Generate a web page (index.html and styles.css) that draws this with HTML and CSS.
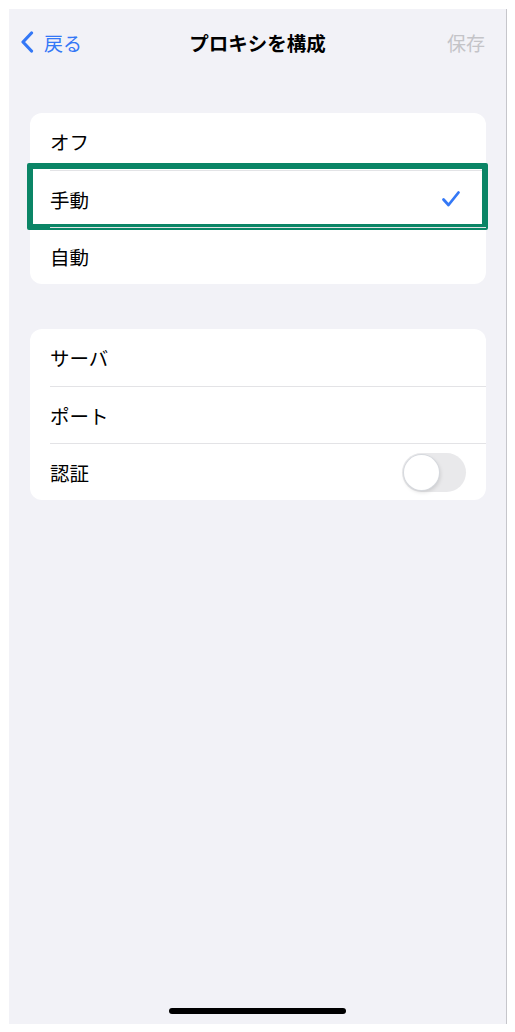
FILE: index.html
```html
<!DOCTYPE html>
<html lang="ja">
<head>
<meta charset="utf-8">
<title>プロキシを構成</title>
<link rel="stylesheet" href="styles.css">
</head>
<body>
	<div class="screen">
		<div class="nav">
			<a class="back">
				<svg class="chevron" viewBox="0 0 14 22" width="14" height="22"><path d="M11.5 2 L3 11 L11.5 20" fill="none" stroke="#3478f6" stroke-width="3.2" stroke-linecap="round" stroke-linejoin="round"/></svg>
				<span>戻る</span>
			</a>
			<div class="title">プロキシを構成</div>
			<div class="save">保存</div>
		</div>

		<!-- プロキシの種類 -->
		<div class="card">
			<div class="row"><span>オフ</span></div>
			<div class="row selected">
				<span>手動</span>
				<svg class="check" viewBox="0 0 20 18" width="20" height="18"><path d="M2.5 9.5 L7.5 15 L17.5 2.5" fill="none" stroke="#3478f6" stroke-width="2.8" stroke-linecap="round" stroke-linejoin="round"/></svg>
				<i class="mark"></i>
			</div>
			<div class="row"><span>自動</span></div>
		</div>

		<!-- 詳細 -->
		<div class="card">
			<div class="row"><span>サーバ</span></div>
			<div class="row"><span>ポート</span></div>
			<div class="row">
				<span>認証</span>
				<div class="switch"><div class="knob"></div></div>
			</div>
		</div>

		<div class="home"></div>
	</div>
</body>
</html>
```

FILE: styles.css
```css
body {
	margin: 0;
	background: #fff;
	font-family: "Noto Sans CJK JP", "Noto Sans", sans-serif;
	color: #000;
}

.screen {
	margin: 9px 0 0 9px;
	width: 497px;
	height: 1015px;
	background: #f2f2f7;
	border-right: 1px solid #c6c6cb;
	display: flex;
	flex-direction: column;
}

/* ナビゲーションバー */
.nav {
	height: 66px;
	display: grid;
	grid-template-columns: 1fr auto 1fr;
	align-items: center;
	padding: 0 21px 0 11px;
}

.back {
	display: flex;
	align-items: center;
	gap: 10px;
	color: #3478f6;
	font-size: 19px;
}

.chevron {
	display: block;
}

.title {
	font-size: 19.5px;
	font-weight: bold;
	margin-left: 10px;
}

.save {
	justify-self: end;
	color: #c4c4c8;
	font-size: 19px;
}

/* リスト */
.card {
	margin: 38px 20px 0 21px;
	background: #fff;
	border-radius: 12px;
}

.card + .card {
	margin-top: 45px;
}

.row {
	position: relative;
	height: 57px;
	margin-left: 20px;
	padding-right: 20px;
	display: flex;
	align-items: center;
	justify-content: space-between;
	font-size: 19.5px;
}

.row + .row {
	border-top: 1px solid #e3e3e6;
	height: 56px;
}

.check {
	display: block;
	margin-right: 5px;
}

/* 選択中の行を囲む枠 */
.mark {
	position: absolute;
	top: -8px;
	bottom: -3px;
	left: -23px;
	right: -2px;
	border: 6px solid #0b8566;
	border-radius: 2px;
}

.switch {
	width: 64px;
	height: 39px;
	border-radius: 20px;
	background: #e9e9eb;
	display: flex;
	align-items: center;
	padding-left: 2px;
	box-sizing: border-box;
}

.knob {
	width: 35px;
	height: 35px;
	border-radius: 50%;
	background: #fff;
	box-shadow: 0 0 0 1px #d6d9de, 1px 2px 4px rgba(0, 0, 0, 0.15);
}

.home {
	margin-top: auto;
	margin-bottom: 10px;
	align-self: center;
	width: 177px;
	height: 6px;
	border-radius: 3px;
	background: #000;
}
```
